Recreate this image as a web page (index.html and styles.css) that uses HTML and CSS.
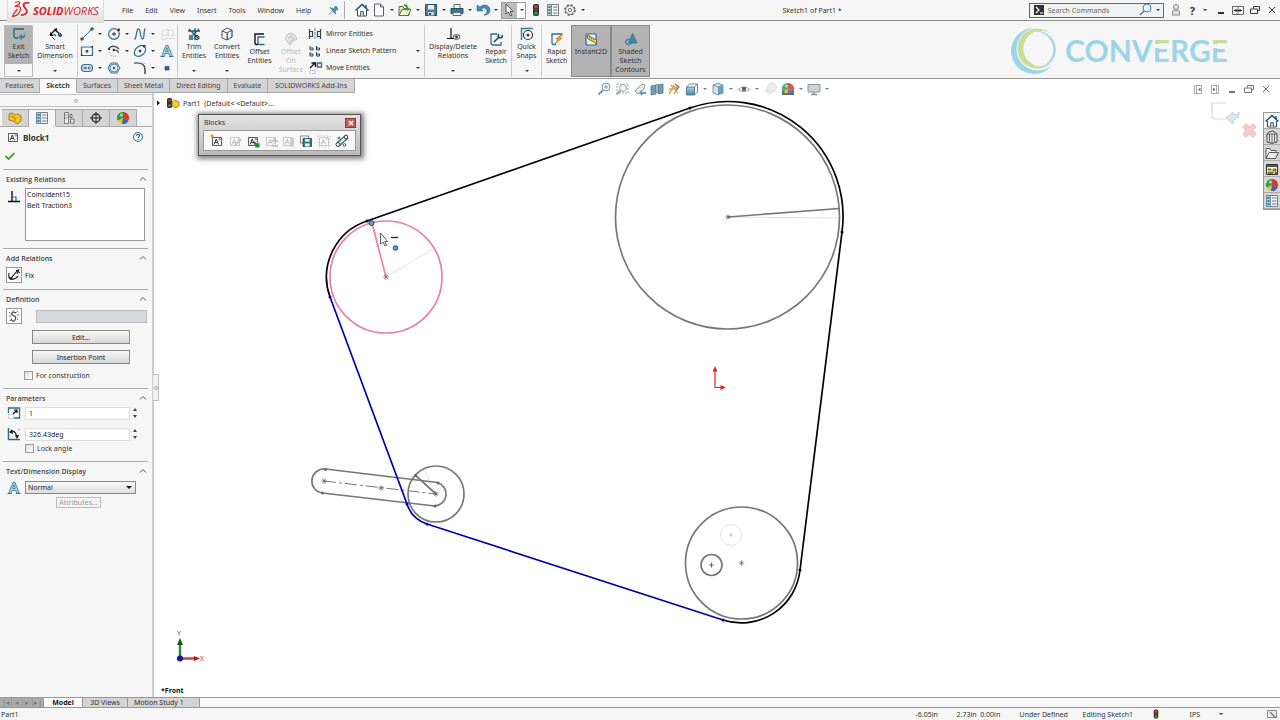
FILE: index.html
```html
<!DOCTYPE html>
<html lang="en">
<head>
<meta charset="utf-8">
<title>Sketch1 of Part1 - SOLIDWORKS</title>
<link rel="stylesheet" href="styles.css">
</head>
<body>
<svg class="defs" aria-hidden="true">
  <defs>
    <linearGradient id="blueFill" x1="0" y1="0" x2="0" y2="1"><stop offset="0" stop-color="#9fc6d8"/><stop offset="1" stop-color="#2f7394"/></linearGradient>
    <symbol id="ball" viewBox="0 0 16 16"><circle cx="8" cy="8" r="6" fill="#e8c32e"/><path d="M8 8V2A6 6 0 0 0 2.500 10.500Z" fill="#2f9e4b"/><path d="M8 8V2A6 6 0 0 1 13.500 10.500Z" fill="#d8392e"/><path d="M8 8 13.500 10.500A6 6 0 0 1 7 14Z" fill="#3a64c0"/><circle cx="6.500" cy="5" r="1.500" fill="#fff" opacity=".6"/></symbol>
    <symbol id="home" viewBox="0 0 16 16"><path d="M3.500 8v6h9V8" fill="#fff" stroke="#3b4a56"/><path d="M1.500 8.500 8 2.500l6.500 6" fill="none" stroke="#1f5474" stroke-width="1.600"/><path d="M6.500 14V9.500h3V14" fill="#b7cad5" stroke="#3b4a56" stroke-width=".8"/><path d="M12 3v3" stroke="#1f5474" stroke-width="1.500"/></symbol>
    <symbol id="list" viewBox="0 0 16 16"><path d="M2.500 2.500h11v11h-11z" fill="#fff" stroke="#778"/><path d="M2.500 2.500h4v11h-4z" fill="#b9d0de" stroke="#6b8ca0"/><path d="M3.500 5h2M3.500 8h2M3.500 11h2" stroke="#1f5f80" stroke-width="1.500"/><path d="M8 5h4.500M8 8h4.500M8 11h4.500" stroke="#57707e"/></symbol>
    <symbol id="traffic" viewBox="0 0 16 16"><rect x="5" y="2" width="6" height="12" rx="2" fill="#333"/><circle cx="8" cy="4.700" r="1.700" fill="#e03a2e"/><circle cx="8" cy="8" r="1.300" fill="#65552c"/><circle cx="8" cy="11.300" r="1.700" fill="#27a244"/></symbol>
    <symbol id="restore" viewBox="0 0 16 16"><path d="M6.500 6.500v-2h6v4h-2M3.500 7h7v4.500h-7z" fill="none" stroke="currentColor"/></symbol>
    <symbol id="close" viewBox="0 0 16 16"><path d="m5 5 6 6m0-6-6 6" fill="none" stroke="currentColor"/></symbol>
    <symbol id="minimize" viewBox="0 0 16 16"><path d="M5 11h6" stroke="currentColor" stroke-width="2"/></symbol>
    <symbol id="block" viewBox="0 0 16 16"><path d="M3.500 4.500h9v8h-9z" fill="#fff" stroke="currentColor" stroke-width=".8"/><path d="m5 11.500 2.200-5.500 2.300 5.500M6 9.500h2.500" fill="none" stroke="currentColor"/><circle cx="10.800" cy="6.300" r=".8" fill="none" stroke="currentColor" stroke-width=".6"/></symbol>
    <symbol id="bigA" viewBox="0 0 16 16"><path d="M2.500 13.500 7 2.500h2l4.500 11h-2.500l-1-3H6l-1 3zM6.700 8.500h2.600L8 4.800z" fill="#a9d5e3" stroke="#2c7390" stroke-width=".8"/><path d="M1.500 13.500h4M10 13.500h4.500" stroke="#2c7390"/></symbol>
    <symbol id="chev" viewBox="0 0 8 8"><path d="m1 5.500 3-3 3 3" fill="none" stroke="#555"/></symbol>
    <symbol id="magnify" viewBox="0 0 16 16"><circle cx="10" cy="6" r="4" fill="#e9f3f8" stroke="#6a8291"/><path d="M7 9 2.500 13.500" stroke="#6a8291" stroke-width="2"/><path d="M8 6h4M10 4v4" stroke="#6a8291" stroke-width=".8"/></symbol>
    <symbol id="star" viewBox="0 0 6 6"><path d="M0 3h6M3 0v6M1 1l4 4M5 1 1 5" stroke-width=".5" fill="none"/></symbol>
  </defs>
</svg>

<header class="titlebar">
  <div class="brand">
    <svg class="ds" viewBox="0 0 19 18"><path d="M3 2.500c4-1.500 6.500-.5 3.500 2L2.500 6.500c5-1 7 .5 5.500 4.500-1 3-4 5-7.500 5.500 2-4 3.500-6 5-7.500" fill="none" stroke="#d8232a" stroke-width="1.200"/><path d="M17.500 3c-4-1-7 .5-5.500 3.500l2.500 3.500c1.500 3-1.500 5-5.500 5" fill="none" stroke="#d8232a" stroke-width="1.800"/></svg>
    <span class="brand-name"><b>SOLID</b>WORKS</span>
  </div>
  <nav class="menus">
    <button>File</button><button>Edit</button><button>View</button><button>Insert</button><button>Tools</button><button>Window</button><button>Help</button>
  </nav>
  <button class="pin" aria-label="Pin menu"><svg class="ic" viewBox="0 0 16 16"><path d="M5 5.500 8 7l3-3 2 3-3 2 .5 3zM7.500 9 4 12.500" fill="#4b95bd" stroke="#2b78a4" stroke-width=".8"/></svg></button>
  <div class="qat">
    <button aria-label="Home"><svg class="ic"><use href="#home"/></svg></button>
    <button class="drop gap1" aria-label="New"><svg class="ic" viewBox="0 0 16 16"><path d="M3.500 2h6l3 3v9h-9z" fill="#fff" stroke="#59646c"/><path d="M9.500 2v3h3" fill="none" stroke="#59646c"/></svg><i></i></button>
    <button class="drop" aria-label="Open"><svg class="ic" viewBox="0 0 16 16"><path d="M2 13.500v-9h4l1 2h5v7z" fill="#e5e2bf" stroke="#66684e"/><path d="m2 13.500 3-6h9l-3 6z" fill="#f5f1d3" stroke="#66684e"/><path d="M6 3c3-2 5 0 5 3l2-.5L10.500 9 8 6.500h1.500C9 4.500 8 4 6 3" fill="#33a02c"/></svg><i></i></button>
    <button class="drop" aria-label="Save"><svg class="ic" viewBox="0 0 16 16"><path d="M2.500 2.500h11v11h-11z" fill="#4d7f9c" stroke="#264c63"/><path d="M5 3h6v4.500H5z" fill="#e7f0f5"/><path d="M5 10h6v3.500H5z" fill="#c0ced6"/><path d="M6 11h2v2H6z" fill="#264c63"/></svg><i></i></button>
    <button class="drop" aria-label="Print"><svg class="ic" viewBox="0 0 16 16"><path d="M5 2.500h6v4H5z" fill="#fff" stroke="#5b6b75"/><path d="M2 6.500h12v5H2z" fill="#417894" stroke="#244c61"/><path d="M4 10.500h8v3H4z" fill="#eef3f6" stroke="#5b6b75"/></svg><i></i></button>
    <button class="drop" aria-label="Undo"><svg class="ic" viewBox="0 0 16 16"><path d="M2 3v6h6L6 7c3-2 6-1 6 2 0 2-1 3-3 4 4 0 6-2 6-5 0-4-5-7-10-3z" fill="#478bb0" stroke="#29637f" stroke-width=".6"/></svg><i></i></button>
    <button class="drop selecttool" aria-label="Select"><svg class="ic" viewBox="0 0 16 16"><path d="M5 2v10l2.500-2 2 4 1.500-.8-2-3.700h3z" fill="#fff" stroke="#333" stroke-width=".8"/></svg><i></i></button>
    <button class="gap2" aria-label="Rebuild"><svg class="ic"><use href="#traffic"/></svg></button>
    <button class="gap1" aria-label="File properties"><svg class="ic"><use href="#list"/></svg></button>
    <button class="drop gap1" aria-label="Options"><svg class="ic" viewBox="0 0 16 16"><circle cx="8" cy="8" r="5" fill="none" stroke="#666" stroke-width="1.600" stroke-dasharray="2.200 1.700"/><circle cx="8" cy="8" r="4.200" fill="#fafafa" stroke="#666" stroke-width=".8"/><circle cx="8" cy="8" r="1.700" fill="#fff" stroke="#555" stroke-width=".8"/></svg><i></i></button>
  </div>
  <div class="doc">Sketch1 of Part1 *</div>
  <div class="search">
    <svg class="ic small" viewBox="0 0 10 10"><path d="M0 0h10v10H0z" fill="#333"/><path d="m2 2 3 3-3 3M6 8h3" fill="none" stroke="#fff" stroke-width="1.200"/></svg>
    <input type="text" placeholder="Search Commands" aria-label="Search Commands">
    <button class="drop" aria-label="Search"><svg class="ic" viewBox="0 0 16 16"><circle cx="10" cy="6" r="4" fill="#e9f6fc" stroke="#527d96"/><path d="M7 9 3 13" stroke="#527d96" stroke-width="1.500"/></svg><i></i></button>
  </div>
  <div class="winbtns">
    <button aria-label="Log in"><svg class="ic" viewBox="0 0 16 16"><circle cx="8" cy="5" r="2.500" fill="#ddd" stroke="#888"/><path d="M4.500 13V10q0-2 2-2h3q2 0 2 2v3z" fill="#ddd" stroke="#888"/></svg></button>
    <button class="drop help" aria-label="Help">?<i></i></button>
    <button aria-label="Minimize"><svg class="ic"><use href="#minimize"/></svg></button>
    <button aria-label="Span displays"><svg class="ic" viewBox="0 0 16 16"><path d="M2.500 4.500h11v8h-11zM8 4.500v8" fill="none" stroke="#666"/><path d="M4 8.500h8M6 7v3M10 7v3" stroke="#222"/></svg></button>
    <button aria-label="Restore"><svg class="ic"><use href="#restore"/></svg></button>
    <button aria-label="Close"><svg class="ic"><use href="#close"/></svg></button>
  </div>
</header>

<section class="ribbon" aria-label="Sketch tools">
  <button class="big split exit"><span class="face"><svg class="ic" viewBox="0 0 16 16"><path d="M13 3H3v7q0 2 2 2h2" fill="none" stroke="#1f6384" stroke-width="1.300"/><path d="m7 11 4-3v2q3 0 3-4 1.500 6-3 6.500V15z" fill="#3d86a9"/></svg>Exit<br>Sketch</span><i></i></button>
  <button class="big split smart"><svg class="ic" viewBox="0 0 16 16"><path d="m3 9 5-5 6 5" fill="none" stroke="#111" stroke-width="1.300"/><path d="m7 3 3-1v3zM3 6v4h4z" fill="#111"/><path d="m5 11 3 3M13 7l2 2-2 2-2-2z" stroke="#1f6384" fill="#1f6384"/><path d="m7 8 2 2" stroke="#1f6384" stroke-width="1.500"/></svg>Smart<br>Dimension<i></i></button>
  <hr>
  <div class="tools">
    <button class="drop" aria-label="Line"><svg class="ic" viewBox="0 0 16 16"><path d="M3.500 12.500l9-9" stroke="#2c6e8e"/><path d="M2 12h2v2H2zM12 2h2v2h-2z" fill="#fff" stroke="#222"/></svg><i></i></button>
    <button class="drop" aria-label="Circle"><svg class="ic" viewBox="0 0 16 16"><circle cx="8" cy="8" r="5.300" fill="none" stroke="#2c6e8e" stroke-width="1.200"/><path d="M7 7h2v2H7zM12 3h1.500v1.500H12z" fill="#fff" stroke="#222"/></svg><i></i></button>
    <button class="drop" aria-label="Spline"><svg class="ic" viewBox="0 0 16 16"><path d="M2.500 13.500C5 12 4 3 6.500 3S8 13 10.500 13 11 4 13.500 2.500" fill="none" stroke="#2c6e8e" stroke-width="1.300"/></svg><i></i></button>
    <button aria-label="Sketch plane"><svg class="ic" viewBox="0 0 16 16"><path d="M3 5.500 9 3v9l-6 2zM9 4.500h5v8H9M3 9h11" fill="none" stroke="#cdcdcd" stroke-dasharray="2 1"/></svg></button>
    <button class="drop" aria-label="Rectangle"><svg class="ic" viewBox="0 0 16 16"><path d="M2.500 4h11v8.500h-11z" fill="none" stroke="#2c6e8e" stroke-width="1.200"/><path d="M7.200 7.500h1.600v1.600H7.200z" fill="#fff" stroke="#222"/><path d="M12.500 3h1.500v1.500h-1.500zM2 11.500h1.500V13H2z" fill="#222"/></svg><i></i></button>
    <button class="drop" aria-label="Arc"><svg class="ic" viewBox="0 0 16 16"><path d="M3 5q5-4 10 1M8 7q5 0 4 3" fill="none" stroke="#444" stroke-width="1.200"/><path d="M7 4.500v5M3 9q1 5 7 4" fill="none" stroke="#888" stroke-dasharray="1 1"/><path d="M2 5h2v2H2zM7 6h2v2H7z" fill="#333"/></svg><i></i></button>
    <button class="drop" aria-label="Ellipse"><svg class="ic" viewBox="0 0 16 16"><ellipse cx="8" cy="8" rx="6.300" ry="4.500" transform="rotate(-40 8 8)" fill="none" stroke="#2c6e8e" stroke-width="1.200"/><path d="M7.200 7.200h1.600v1.600H7.200zM11.500 2.500h1.500V4h-1.500z" fill="#fff" stroke="#222"/></svg><i></i></button>
    <button aria-label="Text"><svg class="ic"><use href="#bigA"/></svg></button>
    <button class="drop" aria-label="Slot"><svg class="ic" viewBox="0 0 16 16"><rect x="2.500" y="4.500" width="11" height="7" rx="3.500" fill="#d7eaf2" stroke="#2c6e8e" stroke-width="1.200"/><path d="M5 8h6" stroke="#222" stroke-dasharray="1 1"/><path d="M5 7h1.500v2H5zM9.500 7H11v2H9.500z" fill="#fff" stroke="#335" stroke-width=".6"/></svg><i></i></button>
    <button aria-label="Polygon"><svg class="ic" viewBox="0 0 16 16"><path d="M5 3h6l3 5-3 5H5L2 8z" fill="none" stroke="#2c6e8e"/><circle cx="8" cy="8" r="4" fill="#e1eff5" stroke="#2c6e8e" stroke-width=".8"/><path d="M7.300 7.300h1.400v1.400H7.300z" fill="#fff" stroke="#222" stroke-width=".8"/></svg></button>
    <button class="drop" aria-label="Fillet"><svg class="ic" viewBox="0 0 16 16"><path d="M2 3h4q7 0 7 7v4" fill="none" stroke="#222" stroke-width="1.200"/><path d="M7 3h6v6" fill="none" stroke="#aaa" stroke-dasharray="1 1"/></svg><i></i></button>
    <button aria-label="Point"><svg class="ic" viewBox="0 0 16 16"><path d="M6 6.500h4v3.500H6z" fill="#2c6e8e" stroke="#174a63" stroke-width=".7"/></svg></button>
  </div>
  <hr>
  <button class="big split w32"><svg class="ic" viewBox="0 0 16 16"><path d="m3 3 10 10M13 3 3 13M2 5h12M9 2v12" stroke="#225d7c" stroke-width="1.300"/><path d="M3 9h4v5H3z" fill="#3d86a9"/><circle cx="11" cy="11.500" r="2" fill="none" stroke="#222"/></svg>Trim<br>Entities<i></i></button>
  <button class="big split w34"><svg class="ic" viewBox="0 0 16 16"><path d="m3 5 5-3 5 2v7l-5 3-5-2z" fill="#f5f8fa" stroke="#555"/><path d="m3 5 5 2 5-3M8 7v7" fill="none" stroke="#555"/><path d="M8.500 6.500 13 4v7l-4.500 2.500z" fill="none" stroke="#2c7ca1"/></svg>Convert<br>Entities<i></i></button>
  <button class="big w31"><svg class="ic" viewBox="0 0 16 16"><path d="M12 3H3v9q0 1.500 1.500 1.500H6" fill="none" stroke="#111" stroke-width="1.400"/><path d="M12.500 6H6v6q0 1.500 1.500 1.500h5" fill="none" stroke="#2c6e8e" stroke-width="1.400"/></svg>Offset<br>Entities</button>
  <button class="big w32" disabled><svg class="ic" viewBox="0 0 16 16"><path d="M2 8q1-5 6-6 5 1 6 6l-4 2-3 4z" fill="#e4e4e4" stroke="#c2c2c2"/><path d="M5 8q3-5 6 0-3 1-4 4" fill="none" stroke="#bbb"/></svg>Offset<br>On<br>Surface</button>
  <div class="rows">
    <button><svg class="ic" viewBox="0 0 16 16"><path d="M2.500 3v10M2.500 5.500h3v5h-3M13.500 3v10M13.500 5.500h-3v5h3" fill="none" stroke="#2e4654" stroke-width="1.200"/><path d="M8 2v12" stroke="#777" stroke-dasharray="3 1"/></svg><span>Mirror Entities</span></button>
    <button><svg class="ic" viewBox="0 0 16 16"><path d="M3 3v4h3V5H3M9.500 3v4h3V5h-3M3 9v4h3v-2H3M9.500 9v4h3v-2h-3" fill="none" stroke="#2e4654"/></svg><span>Linear Sketch Pattern</span><i></i></button>
    <button><svg class="ic" viewBox="0 0 16 16"><path d="m3 8 5-5M4.500 3h4v4" fill="none" stroke="#111" stroke-width="1.400"/><path d="M10.500 3h4v4h-4z" fill="none" stroke="#2c6e8e" stroke-width="1.300"/><path d="M3 10.500h5v3H3z" fill="none" stroke="#999" stroke-dasharray="1 1"/></svg><span>Move Entities</span><i></i></button>
  </div>
  <hr>
  <button class="big split w56"><svg class="ic" viewBox="0 0 16 16"><path d="M6 2v10M2 12.500h7" stroke="#111" stroke-width="1.200"/><ellipse cx="11.500" cy="11" rx="3.500" ry="2.300" fill="#fff" stroke="#444"/><circle cx="11.500" cy="11" r="1.400" fill="#333"/></svg>Display/Delete<br>Relations<i></i></button>
  <button class="big w30"><svg class="ic" viewBox="0 0 16 16"><path d="M9 3H3v9q0 2 2 2h8v-3" fill="none" stroke="#2c6e8e" stroke-width="1.300"/><path d="m6 11 5-5M11 3q-2 3 1 4 3 0 2-3" stroke="#1e4c69" stroke-width="1.700" fill="none"/></svg>Repair<br>Sketch</button>
  <hr>
  <button class="big split w29"><svg class="ic" viewBox="0 0 16 16"><path d="M2.500 14V2.500H14" fill="none" stroke="#2c7ca1" stroke-width="1.400"/><circle cx="9" cy="9" r="4.500" fill="#fff" stroke="#333" stroke-width="1.200"/><circle cx="9" cy="9" r="1.500" fill="#333"/></svg>Quick<br>Snaps<i></i></button>
  <hr>
  <button class="big w29"><svg class="ic" viewBox="0 0 16 16"><path d="M13 3H3v9q0 1.500 1.500 1.500H7" fill="none" stroke="#2c6e8e" stroke-width="1.300"/><path d="M13 3 7 8h2.500L6 13l7-6h-2.500L14 3z" fill="#f4a51c" stroke="#a96909" stroke-width=".6"/></svg>Rapid<br>Sketch</button>
  <button class="big on w40"><svg class="ic" viewBox="0 0 16 16"><path d="M13 3H3v9q0 2 2 2h8V3" fill="#e9eef1" stroke="#2c6e8e" stroke-width="1.200"/><path d="m4.500 4 9 5v3.500l-9-5z" fill="#f3d45a" stroke="#5b5330" stroke-width=".8"/><path d="M6.500 6v1.500M8.500 7v1.500M10.500 8v1.500" stroke="#5b5330" stroke-width=".7"/></svg>Instant2D</button>
  <button class="big on w39"><svg class="ic" viewBox="0 0 16 16"><circle cx="5.500" cy="11" r="3" fill="#73a9c4" stroke="#2e6b8a" stroke-width=".8"/><path d="M9.500 2.500 14 12H6z" fill="#4589aa" stroke="#2e6b8a" stroke-width=".8"/></svg>Shaded<br>Sketch<br>Contours</button>
  <div class="converge" aria-label="Converge">
    <svg viewBox="0 0 50 50"><circle cx="24" cy="26" r="23" fill="#9ed4e8"/><circle cx="28" cy="24" r="21.500" fill="#f6f6f6"/><circle cx="27.500" cy="23.500" r="20" fill="#c5dd97"/><circle cx="31" cy="23.500" r="17.800" fill="#f6f6f6"/><path fill-rule="evenodd" d="M23 6.500A18.500 18.500 0 1 1 27 43 17.500 17.500 0 1 0 23 6.500" fill="#9ed4e8"/></svg>
    <span>CONV<em>E</em>RG<em>E</em></span>
  </div>
</section>

<nav class="tabs">
  <button>Features</button><button class="active">Sketch</button><button>Surfaces</button><button>Sheet Metal</button><button>Direct Editing</button><button>Evaluate</button><button>SOLIDWORKS Add-Ins</button>
</nav>

<main class="work">
  <aside class="panel">
    <div class="grip"><span></span></div>
    <div class="ptabs">
      <button aria-label="Feature tree"><svg class="ic" viewBox="0 0 16 16"><path d="M2 5q0-2 3-2l3 2 3-1 3 2v5l-4 3-4-3-4-1z" fill="#f2c12e" stroke="#a97a0e"/><path d="m4 6 4 2v3" fill="none" stroke="#a97a0e"/></svg></button>
      <button class="active" aria-label="Property manager"><svg class="ic"><use href="#list"/></svg></button>
      <button aria-label="Configurations"><svg class="ic" viewBox="0 0 16 16"><path d="M3.500 2.500h4v11h-4zM3.500 5h3M3.500 8h3" fill="#eee" stroke="#666" stroke-width=".8"/><path d="M9 4.500h2v3H9zM9.500 9h3.500v4H9.500z" fill="#eee" stroke="#555" stroke-width=".8"/></svg></button>
      <button aria-label="Dimensions"><svg class="ic" viewBox="0 0 16 16"><circle cx="8" cy="8" r="4" fill="none" stroke="#222" stroke-width="1.300"/><path d="M8 2v12M2 8h12" stroke="#222"/></svg></button>
      <button aria-label="Display"><svg class="ic"><use href="#ball"/></svg></button>
    </div>
    <div class="phead"><svg class="ic"><use href="#block"/></svg><h1>Block1</h1><button aria-label="Help"><svg viewBox="0 0 12 12"><circle cx="6" cy="6" r="4.500" fill="#eef6fa" stroke="#39677e"/><path d="M4.500 4.800q0-1.500 1.500-1.500t1.500 1.300T6 6.700M6 8v1" fill="none" stroke="#24526b" stroke-width="1.100"/></svg></button></div>
    <div class="ok"><button aria-label="OK"><svg viewBox="0 0 12 10"><path d="m1.500 5 3 3 6-6" fill="none" stroke="#2d9a1e" stroke-width="1.700"/></svg></button></div>

    <section class="s1">
      <h2>Existing Relations<svg><use href="#chev"/></svg></h2>
      <div class="line">
        <svg class="ic" viewBox="0 0 16 16"><path d="M6 3v10M2 13.500h12" stroke="#111" stroke-width="1.400"/><path d="M6 9h4v4" fill="none" stroke="#2c6e8e" stroke-width="1.200"/></svg>
        <ul class="listbox"><li>Coincident15</li><li>Belt Traction3</li></ul>
      </div>
    </section>
    <section class="s2">
      <h2>Add Relations<svg><use href="#chev"/></svg></h2>
      <div class="line"><button class="sq" id="fix" aria-label="Fix"><svg class="ic" viewBox="0 0 16 16"><path d="M3 6q-1 5 2 6 4 1 7-3M5 11l7-8" fill="none" stroke="#111" stroke-width="1.100"/><path d="M10 3l4 3M13 2l-2 5" stroke="#111"/><path d="M3.500 10.500h3v2h-3z" fill="#111"/></svg></button><label for="fix">Fix</label></div>
    </section>
    <section class="s3">
      <h2>Definition<svg><use href="#chev"/></svg></h2>
      <div class="line def"><button class="sq" aria-label="Link"><svg class="ic" viewBox="0 0 16 16"><path d="M10 5q-3-2-4 0t2 3 1 4-4-1" fill="none" stroke="#333" stroke-width="1.100"/><path d="m3 4 1.500 1.500M12 3l-1.500 1.500M13 7h-2M3 8h2M12 12l-1-1M7 2v1.500M4 13l1-1" stroke="#777"/></svg></button><input type="text" class="path" aria-label="Definition file" readonly></div>
      <button class="btn">Edit...</button>
      <button class="btn">Insertion Point</button>
      <label class="check"><input type="checkbox">For construction</label>
    </section>
    <section class="s4">
      <h2>Parameters<svg><use href="#chev"/></svg></h2>
      <div class="nums">
      <div class="line num"><svg class="ic" viewBox="0 0 16 16"><path d="M2.500 8V3h11v10H8" fill="#fff" stroke="#2c6e8e" stroke-width="1.300"/><path d="m7 9 4-4M8 5h3v3" fill="none" stroke="#111" stroke-width="1.200"/><path d="M2.500 9.500h5v4h-5z" fill="#fff" stroke="#aaa" stroke-dasharray="1 1"/></svg><input type="text" value="1" aria-label="Block scale"><span class="spin"><button aria-label="Increase scale"></button><button aria-label="Decrease scale"></button></span></div>
      <div class="line num"><svg class="ic" viewBox="0 0 16 16"><path d="M2.500 2v11.500H14" fill="none" stroke="#2c6e8e" stroke-width="1.500"/><path d="M4 6q5-3 7 5" fill="none" stroke="#111" stroke-width="1.200"/><path d="M9 9h4l-2 4zM6 3 3.500 6.500 7 8z" fill="#111"/><circle cx="13" cy="3.500" r="1" fill="#bbb"/></svg><input type="text" value="326.43deg" aria-label="Block angle"><span class="spin"><button aria-label="Increase angle"></button><button aria-label="Decrease angle"></button></span></div>
      <label class="check lock"><input type="checkbox">Lock angle</label>
      </div>
    </section>
    <section class="s5">
      <h2>Text/Dimension Display<svg><use href="#chev"/></svg></h2>
      <div class="line"><svg class="ic"><use href="#bigA"/></svg><span class="sel"><select aria-label="Text display"><option>Normal</option></select></span></div>
      <button class="btn attr" disabled>Attributes...</button>
    </section>
    <button class="collapse" aria-label="Collapse panel"><span></span></button>
  </aside>

  <div class="canvas">
    <svg class="sketch" viewBox="154 93 1126 604" preserveAspectRatio="xMinYMin meet" fill="none" stroke-width="1.700">
      <g stroke="#e2e2e2" stroke-width="1"><path d="M728 217 839 218M386 277l47-28M436 494l-11-23"/><circle cx="731" cy="535" r="10.500"/></g>
      <g stroke="#777">
        <circle cx="727.500" cy="217" r="112"/><path d="m728 217 111-8.500"/>
        <circle cx="741.500" cy="563" r="56"/><circle cx="711.500" cy="565" r="10.500"/>
        <circle cx="436" cy="494" r="28"/><path d="m415 475 21 19"/>
        <path d="m325.500 469 112 13.500a12 12 0 0 1-3 23.500l-112-13a12 12 0 0 1 3-24"/>
        <path d="m324 481 112 13" stroke-width="1" stroke-dasharray="12 3 3 3"/>
      </g>
      <g stroke="#ea7fae"><circle cx="386" cy="277" r="56"/><path d="m386 277-14-54"/></g>
      <path d="m427 524 296 96M330 297l77 207a31 31 0 0 0 20 20" stroke="#0000a8"/>
      <path d="M330 297A59 59 0 0 1 367 221L690 108A115 115 0 0 1 842 232L800 570A59 59 0 0 1 723 620" stroke="#000"/>
      <g fill="#000"><circle cx="367" cy="221" r="1.500"/><circle cx="690" cy="108" r="1.500"/><circle cx="842" cy="232" r="1.500"/><circle cx="800" cy="570" r="1.500"/></g>
      <g fill="#0000a8"><circle cx="330" cy="297" r="1.500"/><circle cx="407" cy="504" r="1.500"/><circle cx="427" cy="524" r="1.500"/><circle cx="723" cy="620" r="1.500"/></g>
      <g fill="#666"><circle cx="325.500" cy="469.500" r="1.500"/><circle cx="322.500" cy="493" r="1.500"/><circle cx="438" cy="483" r="1.500"/><circle cx="435" cy="506" r="1.500"/><circle cx="415.500" cy="475.500" r="1.500"/></g>
      <g stroke="#444">
        <use href="#star" x="725" y="214" width="6" height="6"/><use href="#star" x="383" y="274" width="6" height="6"/><use href="#star" x="738.500" y="560" width="6" height="6"/><use href="#star" x="321" y="478" width="6" height="6"/><use href="#star" x="378" y="485" width="6" height="6"/><use href="#star" x="433" y="491" width="6" height="6"/>
        <path d="M709 565h5M711.500 562.500v5" stroke-width=".8"/><path d="M729 535h4M731 533v4" stroke="#bbb" stroke-width=".8"/>
      </g>
      <g fill="#5aa5cf" stroke="#1d4c70" stroke-width="1"><circle cx="371.500" cy="223" r="2.500"/><circle cx="395.500" cy="248" r="2.300"/></g>
      <path d="M391 237.500h7" stroke="#222" stroke-width="1.300"/>
      <path d="M380.500 233v11l2.500-2 2 4 1.500-.7-1.800-3.800h3z" fill="#fff" stroke="#333" stroke-width=".8"/>
      <path d="M715 387.500V370M714.500 387.500H722" stroke="#ed1c24" stroke-width="1.200"/><path d="m712.500 371.500 2.500-5.500 2.500 5.500zM720.500 385l5.500 2.500-5.500 2.500z" fill="#ed1c24"/>
      <path d="M180 658v-16" stroke="#2b8c35" stroke-width="2.500"/><path d="m177 645 3-7 3 7z" fill="#135d1c"/>
      <path d="M180 658.500h15" stroke="#e03a36" stroke-width="2.500"/><path d="m194 656 6 2.500-6 2.500z" fill="#b51414"/><circle cx="180" cy="658.500" r="3" fill="#14149c"/>
    </svg>
    <span class="axis y">Y</span><span class="axis x">X</span>
    <div class="tree"><button class="expand" aria-label="Expand tree"></button><svg class="ic" viewBox="0 0 16 16"><rect x="2" y="3" width="5" height="10" rx="1.500" fill="#333"/><circle cx="4.500" cy="5.500" r="1.300" fill="#e03a2e"/><circle cx="4.500" cy="10.500" r="1.300" fill="#27a244"/><path d="m7 7 3-2 4 2v4l-3 2-4-2z" fill="#f6cb3a" stroke="#9c750d" stroke-width=".8"/></svg>Part1&nbsp; (Default&lt; &lt;Default&gt;...</div>

    <div class="views">
      <button class="a" aria-label="Zoom to fit"><svg class="ic"><use href="#magnify"/></svg></button>
      <button class="a" aria-label="Zoom to area"><svg class="ic" viewBox="0 0 16 16"><path d="M3 3h11v9H3z" fill="none" stroke="#999" stroke-dasharray="2 1"/><circle cx="9" cy="7" r="3.500" fill="#edf4f8" stroke="#8296a2"/><path d="m6.500 9.500-4 4" stroke="#8296a2" stroke-width="2"/></svg></button>
      <button class="b" aria-label="Previous view"><svg class="ic" viewBox="0 0 16 16"><path d="m3 10 7-7 3 1-1 4-6 5z" fill="#dfe5e8" stroke="#7d8c95"/><path d="m7 12 3-3v2h4v2h-4v2z" fill="#3f8fb9"/></svg></button>
      <button class="b" aria-label="Section view"><svg class="ic" viewBox="0 0 16 16"><path d="m2 5 5-1v9l-5 1zM9 4l5-1v9l-5 1z" fill="#5f8da6" stroke="#355d73" stroke-width=".8"/><path d="M7 4q1-2 2 0v7H7z" fill="#bdd2dd" stroke="#355d73" stroke-width=".7"/></svg></button>
      <button class="a" aria-label="Dynamic annotation"><svg class="ic" viewBox="0 0 16 16"><path d="m3 13 5-8 2 2 2-3M5 4l7 8M3 8h8l-3 5" fill="none" stroke="#d49a3c" stroke-width="1.500"/><path d="m9 3 4 3-3 3" fill="none" stroke="#668" stroke-width="1.200"/></svg></button>
      <button class="drop" aria-label="View orientation"><svg class="ic" viewBox="0 0 16 16"><path d="M2.500 6h8v8h-8z" fill="url(#blueFill)" stroke="#386c86"/><path d="m2.500 6 3-3h8v8l-3 3M10.500 6l3-3" fill="none" stroke="#546f7d"/></svg><i></i></button>
      <button class="drop" aria-label="Display style"><svg class="ic" viewBox="0 0 16 16"><path d="m3 4 5-2 5 2v8l-5 2-5-2z" fill="#c8dfe9" stroke="#6b8796"/><path d="M8 6v8l5-2V4z" fill="#4792b5"/><path d="m3 4 5 2 5-2" fill="none" stroke="#6b8796"/></svg><i></i></button>
      <button class="drop" aria-label="Hide or show"><svg class="ic" viewBox="0 0 16 16"><path d="M2 8.500Q8 3 14 8.500 8 12.500 2 8.500" fill="#f4f4f4" stroke="#9aa0a4"/><circle cx="8" cy="8" r="2.200" fill="#3e4b52"/></svg><i></i></button>
      <button class="c" aria-label="Edit appearance"><svg class="ic" viewBox="0 0 16 16"><circle cx="9" cy="6.500" r="4.500" fill="#e9e9e9" stroke="#d8d8d8"/><path d="m3 7 6 5-2 2-5-4z" fill="#e0e0e0"/></svg></button>
      <button class="drop" aria-label="Apply scene"><svg class="ic"><use href="#ball"/><path d="M2 14v-4h3l-1 2h8l-1-2h3v4z" fill="#4a5359"/></svg><i></i></button>
      <button class="drop" aria-label="View settings"><svg class="ic" viewBox="0 0 16 16"><path d="M2 3.500h12v7.500H2z" fill="#c4cdd2" stroke="#77838a"/><path d="M8 11v2M5 13.500h6" stroke="#77838a" stroke-width="1.500"/></svg><i></i></button>
    </div>
    <div class="docbtns">
      <button aria-label="Tile left"><svg class="ic" viewBox="0 0 16 16"><path d="M4.500 4.500h7v8h-7zM6.500 4.500v8" fill="#fff" stroke="#aaa"/><path d="M10.500 6.500v4L8 8.500z" fill="#777"/></svg></button>
      <button aria-label="Tile right"><svg class="ic" viewBox="0 0 16 16"><path d="M4.500 4.500h7v8h-7zM9.500 4.500v8" fill="#fff" stroke="#aaa"/><path d="M6 6.500v4l2.500-2z" fill="#777"/></svg></button>
      <button aria-label="Minimize document"><svg class="ic"><use href="#minimize"/></svg></button>
      <button aria-label="Restore document"><svg class="ic"><use href="#restore"/></svg></button>
      <button aria-label="Close document"><svg class="ic"><use href="#close"/></svg></button>
    </div>
    <div class="confirm">
      <button aria-label="Exit sketch"><svg viewBox="0 0 30 26"><path d="M15 1H1v12q0 4 4 4h9" fill="none" stroke="#cfdbe4" stroke-width="1.200"/><path d="m15 16 7-6v3q5 0 6-3 1 7-6 8v4z" fill="#dbe9ef" stroke="#bccfd9"/></svg></button>
      <button aria-label="Cancel sketch"><svg class="x" viewBox="0 0 16 16"><path d="m3 3 10 10M13 3 3 13" stroke="#e9b6b3" stroke-width="5"/><path d="m3 3 10 10M13 3 3 13" stroke="#f3cbc9" stroke-width="3.500"/></svg></button>
    </div>
    <div class="taskpane">
      <button class="active" aria-label="Resources"><svg class="ic"><use href="#home"/></svg></button>
      <button aria-label="Design library"><svg class="ic" viewBox="0 0 16 16"><path d="M3 5v8l5 1.500 5-1.500V5L9 2 5 3z" fill="#e8e8e8" stroke="#444"/><path d="M5.500 5v8M8 5v9M10.500 5v8M3 5h10" stroke="#555" stroke-width=".9"/></svg></button>
      <button aria-label="File explorer"><svg class="ic" viewBox="0 0 16 16"><path d="M2 13.500v-10h4l1 2h5v2" fill="#fff" stroke="#555"/><path d="m2 13.500 3-6h9.500l-3 6z" fill="#eee" stroke="#555"/></svg></button>
      <button aria-label="View palette"><svg class="ic" viewBox="0 0 16 16"><path d="M2.500 3.500h11v10h-11z" fill="#fff3b5" stroke="#333"/><path d="M3 5h10" stroke="#555" stroke-width="2"/><path d="M4 8h3v1H4zM9 8h3v2H9zM4 11h5v1.500H4zM11 11h1.500v2H11z" fill="#c89a1b" stroke="#333" stroke-width=".6"/></svg></button>
      <button aria-label="Appearances"><svg class="ic"><use href="#ball"/></svg></button>
      <button aria-label="Custom properties"><svg class="ic"><use href="#list"/></svg></button>
    </div>

    <div class="blocks">
      <div class="bhead"><span>Blocks</span><button aria-label="Close toolbar"><svg viewBox="0 0 10 8"><path d="m3 2 4 4m0-4L3 6" stroke="#fff" stroke-width="1.500"/></svg></button></div>
      <div class="bbody">
        <button aria-label="Make block"><svg class="ic"><use href="#block"/><path d="M1 3h4M3 1v4" stroke="#e08d1a" stroke-width="1.200"/></svg></button>
        <button aria-label="Edit block" disabled><svg class="ic"><use href="#block"/><path d="m8 12 6-6" stroke="#ccc" stroke-width="2.500"/></svg></button>
        <button aria-label="Insert block"><svg class="ic"><use href="#block"/><path d="m9 9 3 3" stroke="#1d8a2b" stroke-width="2"/><path d="M14.500 9.500v5h-5z" fill="#1d8a2b"/></svg></button>
        <button aria-label="Add or remove" disabled><svg class="ic"><use href="#block"/><path d="M9 8h6M12 5v6M9 13h6" stroke="#bbb" stroke-width="1.300"/></svg></button>
        <button aria-label="Rebuild block" disabled><svg class="ic"><use href="#block"/><rect x="10" y="5" width="4" height="9" rx="1.500" fill="#ccc"/></svg></button>
        <button aria-label="Save block"><svg class="ic" viewBox="0 0 16 16"><path d="M2.500 3h8v7h-8z" fill="#fff" stroke="#666" stroke-width=".8"/><path d="M5 5.500h8.500v8H5z" fill="#44788f" stroke="#1d455b" stroke-width=".8"/><path d="M7 6h4.500v2.500H7zM7 10.500h4.500v3H7z" fill="#e5edf1"/></svg></button>
        <button aria-label="Explode block" disabled><svg class="ic"><use href="#block"/><path d="M2 3h12v11H2z" fill="none" stroke="#bbb" stroke-dasharray="1 2"/></svg></button>
        <button aria-label="Belt or chain"><svg class="ic" viewBox="0 0 16 16"><path d="m3 10 8-7M5 13l9-8" stroke="#1f6384" stroke-width="1.100"/><circle cx="4" cy="11.500" r="2" fill="#fff" stroke="#333"/><circle cx="12" cy="4" r="1.800" fill="#fff" stroke="#333"/><circle cx="10.500" cy="12" r="1.300" fill="#fff" stroke="#1f6384"/><circle cx="5" cy="5" r="1" fill="#fff" stroke="#1f6384"/></svg></button>
      </div>
    </div>
    <span class="viewname">*Front</span>
  </div>
</main>

<nav class="sheets">
  <span class="navs"><button aria-label="First">|◂</button><button aria-label="Previous">◂</button><button aria-label="Next">▸</button><button aria-label="Last">▸|</button></span>
  <button class="active">Model</button><button>3D Views</button><button>Motion Study 1</button>
</nav>
<footer class="status">
  <span class="grow">Part1</span><span class="c1">-6.05in</span><span class="c2">2.73in&nbsp; 0.00in</span><span class="c3">Under Defined</span><span class="c4">Editing Sketch1</span><svg class="ic short"><use href="#traffic"/></svg><button class="units">IPS<i></i></button><svg class="ic tag" viewBox="0 0 16 16"><path d="M3.500 4.500h9v7h-9z" fill="#eee" stroke="#888"/><path d="m6 6 6 6" stroke="#777" stroke-width="1.500"/></svg>
</footer>
</body>
</html>
```

FILE: styles.css
```css
* { box-sizing: border-box; }
html, body { height: 100%; }
body { margin: 0; display: flex; flex-direction: column; overflow: hidden; background: #f6f6f6; color: #333; font: 7px/9px "Noto Sans", "Open Sans", sans-serif; }
button { margin: 0; padding: 0; border: 0; background: none; color: inherit; font: inherit; display: flex; align-items: center; justify-content: center; white-space: nowrap; flex: none; }
input, select { font: inherit; color: #222; margin: 0; border-radius: 0; min-width: 0; }
h1, h2, ul { margin: 0; padding: 0; font-size: inherit; }
.defs { position: absolute; width: 0; height: 0; }
svg { display: block; flex: none; }
.ic { width: 16px; height: 16px; }
.small { width: 10px; height: 10px; }
.short { height: 12px; }
i { flex: none; width: 0; height: 0; border: 2px solid transparent; border-top-color: #333; border-bottom-width: 0; }
.drop { justify-content: flex-start; gap: 3px; padding-right: 3px; }
.gap1 { margin-left: 1px; }
.gap2 { margin-left: 2px; }

.titlebar { display: flex; align-items: center; height: 21px; flex: none; border-bottom: 1px solid #8b8b8b; position: relative; background: #f6f6f6; z-index: 2; }
.brand { align-self: flex-start; display: flex; align-items: center; gap: 2px; width: 97px; height: 23px; margin-left: 7px; padding: 0 0 4px 4px; flex: none; background: linear-gradient(#fff, #dedede); border: 1px solid #ddd; border-top: 0; }
.ds { width: 19px; height: 18px; }
.brand-name { color: #d8232a; font: italic 11px/14px "Open Sans", sans-serif; padding-top: 4px; }
.menus { display: flex; gap: 12px; margin-left: 18px; }
.pin { margin-left: 14px; padding-right: 3px; border-right: 1px solid #aaa; height: 18px; }
.qat { display: flex; align-items: center; margin-left: 9px; }
.selecttool { height: 17px; background: linear-gradient(90deg, #bbb 16px, #fff 16px); outline: 1px solid #999; outline-offset: -1px; padding-right: 2px; }
.doc { flex: 1; text-align: center; padding-left: 7px; }
.search { display: flex; align-items: center; width: 135px; height: 15px; padding: 0 0 0 4px; border: 1px solid #666; background: #f0f2f3; flex: none; }
.search input { flex: 1; border: 0; background: none; padding: 0 4px; }
.search input::placeholder { color: #666; opacity: 1; }
.winbtns { display: flex; align-items: center; gap: 1px; margin-left: 4px; color: #333; }
.help { font-weight: bold; font-size: 11px; padding: 0 5px; gap: 8px; }

.ribbon { display: flex; flex: none; height: 58px; padding: 4px 0 1px 4px; border-bottom: 1px solid #999; position: relative; }
.ribbon hr { width: 1px; height: 52px; margin: 0; border: 0; background: #ccc; flex: none; }
.big { flex-direction: column; justify-content: flex-start; height: 52px; padding-top: 6px; text-align: center; }
.big.split { padding-top: 1px; }
.split > i { margin: auto 0 5px; }
.big:disabled { color: #bbb; }
.exit { width: 29px; border: 1px solid #bbb; }
.exit .face { display: flex; flex-direction: column; align-items: center; align-self: stretch; height: 38px; background: #b3b3b3; }
.big.exit { padding: 0; }
.big.exit > i { margin-bottom: 4px; }
.smart { width: 44px; }
.tools { display: grid; grid-template-columns: 27px 26px 27px 18px; grid-auto-rows: 17px; width: 99px; padding-left: 1px; flex: none; }
.tools button { justify-content: flex-start; }
.w29 { width: 29px; } .w30 { width: 30px; } .w31 { width: 31px; } .w32 { width: 32px; } .w34 { width: 34px; } .w39 { width: 39px; } .w40 { width: 40px; } .w56 { width: 56px; }
.on { background: #b3b3b3; outline: 1px solid #888; outline-offset: -1px; }
.rows { display: grid; grid-auto-rows: 17px; width: 117px; flex: none; }
.rows button { justify-content: flex-start; gap: 3px; padding-right: 4px; }
.rows i { margin-left: auto; }
.converge { display: flex; align-items: center; gap: 5px; margin: -2px 52px 0 auto; color: #9ed4e8; font: bold 30px/36px Lato, sans-serif; }
.converge svg { width: 50px; height: 50px; }
.converge em { font-style: normal; color: transparent; background: linear-gradient(transparent 7px, #c5dd97 7px 12px, transparent 12px 16px, #9ed4e8 16px); -webkit-background-clip: text; background-clip: text; }

.tabs { display: flex; height: 14px; flex: none; background: #fff; color: #444; }
.tabs button { background: #d4d4d4; border-right: 1px solid #aaa; border-bottom: 1px solid #aaa; padding: 0 5px; font-size: 7px; }
.tabs .active { background: #fafafa; border-bottom-color: #fafafa; font-weight: bold; }
.tabs button:nth-child(1) { width: 40px; } .tabs button:nth-child(2) { width: 37px; } .tabs button:nth-child(3) { width: 41px; }
.tabs button:nth-child(4) { width: 52px; } .tabs button:nth-child(5) { width: 58px; } .tabs button:nth-child(6) { width: 40px; } .tabs button:nth-child(7) { width: 87px; }

.work { display: flex; flex: 1; min-height: 0; }
.panel { width: 154px; flex: none; border-right: 2px solid #ccc; position: relative; background: #f6f6f6; }
.grip { height: 13px; margin-top: 1px; border-bottom: 1px solid #bbb; border-top: 1px solid #ccc; display: grid; place-items: center; }
.grip span, .collapse span { width: 4px; height: 4px; border: 1px solid #aaa; border-radius: 50%; }
.ptabs { display: flex; margin-top: 2px; padding-left: 2px; height: 18px; border-bottom: 1px solid #aaa; }
.ptabs button { width: 27px; height: 18px; background: #d4d4d4; border: 1px solid #aaa; border-left: 0; }
.ptabs .active { background: #f6f6f6; border-bottom-color: #f6f6f6; }
.phead { display: flex; align-items: center; height: 18px; margin-top: 1px; padding: 0 8px 0 5px; gap: 2px; }
.phead button { margin-left: auto; }
.phead button svg { width: 12px; height: 12px; }
.phead h1 { font-size: 8px; }
.ok { height: 23px; padding: 5px 4px 0; }
.ok svg { width: 12px; height: 10px; }
.panel section { margin: 0 4px 0 3px; border-top: 1px solid #aaa; }
.panel h2 { display: flex; justify-content: space-between; align-items: center; height: 18px; padding: 0 1px 0 3px; color: #444; font: 600 7px/9px "Open Sans", sans-serif; }
.panel h2 svg { width: 8px; height: 8px; }
.line { display: flex; align-items: flex-start; padding-left: 3px; gap: 3px; color: #222; }
.s1 { height: 79px; } .s2 { height: 41px; } .s3 { height: 99px; } .s4 { height: 73px; }
.listbox { list-style: none; width: 120px; height: 53px; padding: 0 1px; border: 1px solid #999; background: #fff; line-height: 11px; }
.sq { width: 16px; height: 16px; border: 1px solid #999; background: #fafafa; }
.s2 .line { align-items: center; }
.line.def { justify-content: space-between; align-items: center; padding-right: 1px; }
.path { width: 111px; height: 13px; border: 1px solid #bbb; background: #d5dade; }
.btn { width: 98px; height: 14px; margin: 6px 0 0 29px; border: 1px solid #888; background: linear-gradient(#f6f6f6, #d8d8d8); color: #222; }
.check { display: flex; align-items: center; gap: 3px; margin: 7px 0 0 21px; color: #333; }
.check input { appearance: none; width: 9px; height: 9px; border: 1px solid #999; background: linear-gradient(135deg, #ddd, #fff); }
.nums { margin-top: -2px; }
.num { height: 16px; align-items: center; }
.num input { width: 105px; height: 13px; padding: 0 3px; border: 1px solid #ddd; background: #fff; }
.num + .num { margin-top: 5px; }
.spin { display: grid; gap: 4px; }
.spin button { width: 4px; height: 3px; background: #444; clip-path: polygon(50% 0, 100% 100%, 0 100%); }
.spin button + button { clip-path: polygon(0 0, 100% 0, 50% 100%); }
.check.lock { margin: 2px 0 0 22px; }
.sel { position: relative; width: 111px; margin-top: 1px; }
.sel select { appearance: none; width: 100%; height: 13px; padding: 0 2px; border: 1px solid #888; background: linear-gradient(#fafafa, #dcdcdc); }
.sel::after { content: ""; position: absolute; right: 4px; top: 5px; border: 3px solid transparent; border-top-color: #111; border-bottom: 0; }
.attr { width: 45px; height: 11px; margin: 1px 0 0 53px; color: #999; border-color: #bbb; background: #f4f4f4; }
.collapse { position: absolute; left: 153px; top: 281px; width: 6px; height: 27px; border: 1px solid #bbb; border-left: 0; background: #f2f2f2; z-index: 1; }

.canvas { flex: 1; position: relative; background: #fff; min-width: 0; }
.sketch { position: absolute; left: 0; top: 0; width: 100%; height: 100%; }
.axis { position: absolute; left: 23px; top: 536px; color: #555; }
.axis.x { left: 46px; top: 561px; color: #c33; }
.tree { position: absolute; left: 3px; top: 2px; display: flex; align-items: center; white-space: nowrap; }
.tree .ic { margin: 0 2px 0 5px; }
.expand { width: 3px; height: 5px; background: #111; clip-path: polygon(0 0, 100% 50%, 0 100%); }
.views { position: absolute; left: 442px; top: -12px; display: flex; opacity: .85; }
.views .a { margin-right: 2px; }
.views .b, .views .c { margin-right: 1px; }
.views .c { margin-left: 1px; }
.views i { border-top-color: #666; }
.docbtns { position: absolute; right: 6px; top: -12px; display: flex; gap: 1px; color: #777; }
.confirm { position: absolute; right: 22px; top: 9px; display: flex; align-items: flex-end; }
.confirm svg { width: 30px; height: 26px; }
.confirm svg.x { width: 17px; height: 17px; }
.confirm button + button { margin-bottom: -11px; }
.taskpane { position: absolute; right: 0; top: 19px; width: 17px; border: 1px solid #999; border-right: 0; }
.taskpane button { width: 16px; height: 16px; background: #d6d6d6; border-bottom: 1px solid #aaa; }
.taskpane .active { background: #fafafa; }
.blocks { position: absolute; left: 44px; top: 21px; width: 163px; height: 42px; padding: 0 4px; border: 1px solid #555; background: linear-gradient(#e2e2e2, #bbb); box-shadow: 1px 1px 5px 2px rgba(0, 0, 0, .5); }
.bhead { display: flex; align-items: center; justify-content: space-between; height: 15px; padding-left: 1px; }
.bhead button { width: 11px; height: 10px; background: #c75b50; border: 1px solid #8a3a33; }
.bhead svg { width: 10px; height: 8px; }
.bbody { display: flex; align-items: center; justify-content: space-between; height: 21px; padding: 0 5px; border: 1px solid #999; background: #f7f7f7; color: #333; }
.bbody button:disabled { color: #bbb; }
.viewname { position: absolute; left: 7px; bottom: 2px; color: #111; font-weight: bold; }

.sheets { display: flex; height: 11px; flex: none; border-top: 1px solid #999; border-bottom: 1px solid #999; background: #f8f8f8; }
.sheets > button { background: #d4d4d4; border-right: 1px solid #999; padding: 0 6px; }
.sheets > .active { background: #fff; font-weight: bold; color: #111; width: 39px; }
.sheets > button:nth-of-type(2) { width: 45px; } .sheets > button:nth-of-type(3) { width: 72px; padding: 0 10px 0 6px; justify-content: flex-start; }
.navs { display: flex; width: 44px; padding-left: 1px; background: #aaa; color: #777; }
.navs button { flex: 1; border-right: 1px solid #999; }
.status { display: flex; align-items: center; height: 12px; flex: none; padding-left: 1px; white-space: nowrap; overflow: hidden; }
.grow { flex: 1; }
.c1 { width: 41px; } .c2 { width: 63px; } .c3 { width: 63px; } .c4 { width: 65px; }
.units { gap: 19px; margin-left: 26px; }
.tag { margin-left: 41px; }
```
